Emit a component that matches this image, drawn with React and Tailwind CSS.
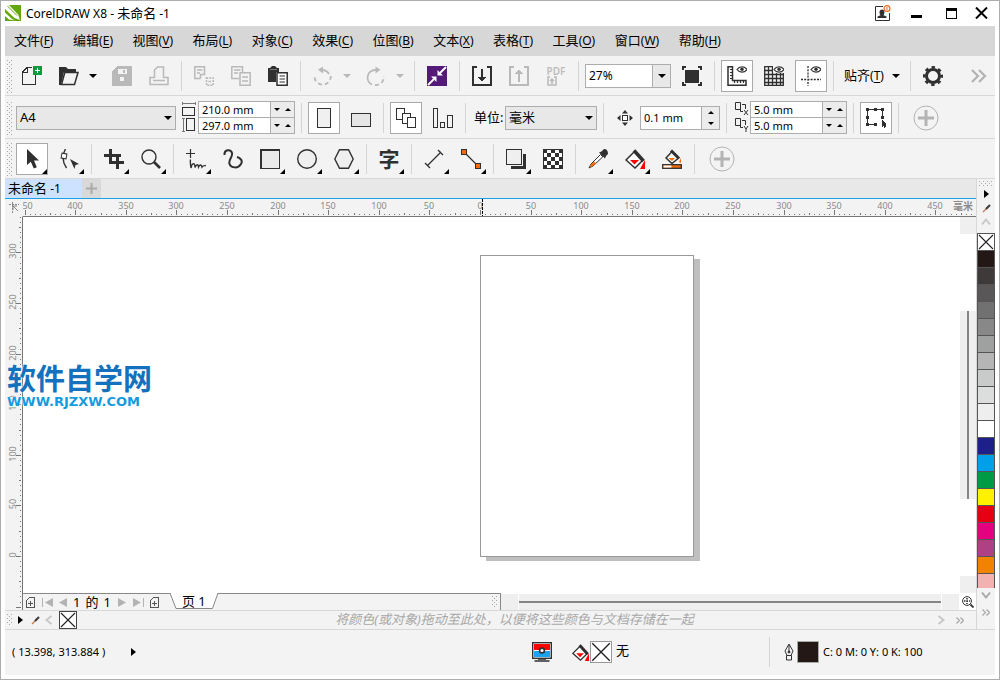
import React, { useLayoutEffect, useRef, useState } from 'react';

const INK = '#303030';
const DIM = '#b9b9b9';

/* ---------- shared pieces ---------- */

function Icon({ children, crisp, size = 20 }) {
  return (
    <svg width={size} height={size} viewBox="0 0 20 20" fill="none" stroke={INK} strokeWidth="1.5" shapeRendering={crisp ? 'crispEdges' : 'auto'} aria-hidden="true" className="shrink-0">
      {children}
    </svg>
  );
}

function Grip({ id, className, width = 5 }) {
  return (
    <svg className={className} width={width} shapeRendering="crispEdges" aria-hidden="true">
      <defs>
        <pattern id={id} width="4" height="4" patternUnits="userSpaceOnUse">
          <rect width="1" height="1" fill="#a9a9a9" />
          <rect x="2" y="2" width="1" height="1" fill="#a9a9a9" />
        </pattern>
      </defs>
      <rect width="100%" height="100%" fill={`url(#${id})`} />
    </svg>
  );
}

const ToolbarGrip = ({ id }) => <Grip id={id} className="-mr-px h-[33px] shrink-0" />;

const Sep = () => <div className="mx-px h-[30px] w-px shrink-0 bg-[#d4d4d4]" />;

function Tool({ label, active, flyout, children }) {
  return (
    <button
      type="button"
      aria-label={label}
      className={`relative flex size-8 shrink-0 items-center justify-center border ${active ? 'border-[#a9a9a9] bg-white' : 'border-transparent'}`}
    >
      {children}
      {flyout && (
        <svg width="5" height="5" className="absolute right-0 bottom-0" aria-hidden="true">
          <path d="M5 0V5H0Z" fill="#000" />
        </svg>
      )}
    </button>
  );
}

function Caret({ dir = 'down', color = '#000', small }) {
  const d = { down: 'M0 0H8L4 4.5Z', up: 'M0 4.5H8L4 0Z' }[dir];
  return (
    <svg width={small ? 6 : 8} height={small ? 3 : 4} viewBox="0 0 8 4.5" preserveAspectRatio="none" aria-hidden="true" className="shrink-0">
      <path d={d} fill={color} />
    </svg>
  );
}

function DropArrow({ label, dim }) {
  return (
    <button type="button" aria-label={label} className="-ml-[5px] flex h-8 w-4 shrink-0 items-center justify-center">
      <Caret color={dim ? '#b8b8b8' : '#000'} />
    </button>
  );
}

function Toolbar({ label, className, children }) {
  return (
    <div role="toolbar" aria-label={label} className={`flex shrink-0 items-center gap-[5px] overflow-hidden border-b border-[#d7d7d7] bg-[#f3f3f3] pl-0.5 ${className}`}>
      {children}
    </div>
  );
}

function AddRound({ label }) {
  return (
    <button type="button" aria-label={label} className="flex h-8 w-[42px] shrink-0 items-center justify-center">
      <svg width="26" height="26" viewBox="0 0 26 26" fill="none" aria-hidden="true">
        <circle cx="13" cy="13" r="12" stroke="#b3b3b3" />
        <path d="M13 5V21M5 13H21" stroke="#b3b3b3" strokeWidth="3" />
      </svg>
    </button>
  );
}

function Select({ label, value, className }) {
  return (
    <span className={`relative flex h-6 shrink-0 items-center ${className}`}>
      <select aria-label={label} defaultValue={value} className="h-full w-full appearance-none border border-[#adadad] bg-[#e8e8e8] pr-5 pl-[3px] text-[13px] text-black">
        <option>{value}</option>
      </select>
      <span className="pointer-events-none absolute right-1"><Caret /></span>
    </span>
  );
}

function PairInput({ first, second, labels }) {
  const row = (value, label, line) => (
    <div className={`flex ${line ? 'h-4 border-b border-[#adadad]' : 'h-[15px]'}`}>
      <input aria-label={label} defaultValue={value} className="w-0 min-w-0 flex-1 bg-white px-[3px] text-[11px] leading-[14px] outline-none" />
      <div className="flex w-6 items-center justify-around border-l border-[#adadad] bg-[#ececec]">
        <button type="button" aria-label={`${label} -`}><Caret small /></button>
        <button type="button" aria-label={`${label} +`}><Caret small dir="up" /></button>
      </div>
    </div>
  );
  return (
    <div className="mb-px h-[33px] w-[97px] shrink-0 overflow-hidden border border-[#adadad]">
      {row(first, labels[0], true)}
      {row(second, labels[1], false)}
    </div>
  );
}

/* ---------- title and menu ---------- */

const MENUS = [
  ['文件', 'F'], ['编辑', 'E'], ['视图', 'V'], ['布局', 'L'], ['对象', 'C'], ['效果', 'C'],
  ['位图', 'B'], ['文本', 'X'], ['表格', 'T'], ['工具', 'O'], ['窗口', 'W'], ['帮助', 'H'],
];

function TitleBar() {
  return (
    <header className="flex h-[25px] shrink-0 items-center bg-white pr-[7px] pb-px">
      <svg width="16" height="16" viewBox="0 0 16 16" aria-hidden="true">
        <rect width="16" height="16" fill="#63a70a" />
        <path d="M0 0H4L13 9.500L15 15L9.500 13L0 4Z" fill="#fff" />
        <path d="M0 7.500L7 14L10 15.500L4 14.500L0 11Z" fill="#fff" />
        <path d="M2.500 1L12 10.500" stroke="#63a70a" strokeWidth="1" />
      </svg>
      <h1 className="ml-[5px] text-[13px] leading-5"><span className="text-[12px]">CorelDRAW X8 - </span>未命名<span className="text-[12px]"> -1</span></h1>
      <div className="ml-auto flex items-center">
        <button type="button" aria-label="账户" className="mr-5">
          <svg width="17" height="17" viewBox="0 0 17 17" fill="none" aria-hidden="true">
            <path d="M9 1.500H1.500V15.500H15.500V8" stroke="#303030" />
            <path d="M3.500 13V11.500L6.500 10.200C5 8.500 5 4.500 8 4.500S11 8.500 9.500 10.200L12.500 11.500V13Z" fill="#303030" />
            <circle cx="13" cy="3.500" r="2.900" stroke="#f26a1b" strokeWidth="1.200" />
            <path d="M13 2V5" stroke="#f26a1b" />
          </svg>
        </button>
        <button type="button" aria-label="最小化" className="mr-6 flex h-[10px] w-[11px] items-end"><span className="h-[3px] w-full bg-black" /></button>
        <button type="button" aria-label="最大化" className="mr-[18px] h-[11px] w-[11px] border border-t-[3px] border-black" />
        <button type="button" aria-label="关闭">
          <svg width="13" height="12" viewBox="0 0 13 12" aria-hidden="true"><path d="M1 .5L12 11.500M12 .5L1 11.500" stroke="#000" strokeWidth="2" /></svg>
        </button>
      </div>
    </header>
  );
}

function MenuBar() {
  return (
    <nav aria-label="菜单" className="flex h-[30px] shrink-0 items-center overflow-hidden bg-[#d7d7d7] pb-0.5 pl-[9px]">
      <div className="flex w-full max-w-[707px] justify-between">
        {MENUS.map(([name, key]) => (
          <button key={name} type="button" className="shrink-0 text-[13px] leading-5">
            {name}<span className="text-[12px]">(<u className="underline-offset-2">{key}</u>)</span>
          </button>
        ))}
      </div>
    </nav>
  );
}

/* ---------- standard toolbar ---------- */

const Eye = ({ x = 10 }) => (
  <g transform={`translate(${x} 0)`}>
    <path d="M0 3.500C2.500 -.2 7.500 -.2 10 3.500C7.500 7 2.500 7 0 3.500Z" fill="#fff" strokeWidth="1.200" />
    <circle cx="5" cy="3.300" r="1.700" fill={INK} stroke="none" />
  </g>
);

function StandardBar() {
  return (
    <Toolbar label="标准" className="h-10 pt-px">
      <ToolbarGrip id="grip-standard" />
      <Tool label="新建">
        <Icon crisp>
          <path d="M13.500 9V18.500H.5V6L5.500 1.500H10" />
          <path d="M1 6.500H5.500V2" />
          <rect x="11" y="0" width="9" height="9" fill="#0a9b3c" stroke="none" />
          <path d="M15.500 2V7M13 4.500H18" stroke="#fff" strokeWidth="1" />
        </Icon>
      </Tool>
      <Tool label="打开">
        <Icon>
          <path d="M0 19V1H7L9 3H17V6H5L2 19Z" fill={INK} stroke="none" />
          <path d="M5.800 6.500H19L15.500 18.500H2.500Z" fill="#f3f3f3" />
        </Icon>
      </Tool>
      <DropArrow label="打开选项" />
      <Tool label="保存">
        <Icon crisp>
          <path d="M0 5L5 0H20V20H0Z" fill={DIM} stroke="none" />
          <rect x="6" y="3" width="9" height="5" fill="#f3f3f3" stroke="none" />
          <rect x="11" y="4" width="2" height="3" fill={DIM} stroke="none" />
          <circle cx="10" cy="13" r="2.500" fill="#f3f3f3" stroke="none" />
        </Icon>
      </Tool>
      <Tool label="打印">
        <Icon>
          <path d="M5.500 12V4L8.500 1H14.500V12M5.500 11.500H1V18.500H19V11.500H14.500M4 14.500H16" stroke={DIM} />
        </Icon>
      </Tool>
      <Sep />
      <Tool label="剪切">
        <Icon>
          <path d="M6.500 12.500H.8V.8H10.500V8.500H6.500V12.500M3 4H8.500M3 7H6" stroke={DIM} />
          <path d="M12.500 11V19.200H19.200V12H12" stroke={DIM} strokeDasharray="2 1" />
          <path d="M14.500 15.500H17" stroke={DIM} />
        </Icon>
      </Tool>
      <Tool label="复制">
        <Icon>
          <path d="M8 12.500H.8V.8H11.500V6M3 4H9.500M3 7H7" stroke={DIM} />
          <path d="M9 6.800H19.200V19.200H9ZM11 11H17M11 15H17" stroke={DIM} />
        </Icon>
      </Tool>
      <Tool label="粘贴">
        <Icon>
          <path d="M0 2H2L4 0H7L9 2H11V6H8V16H0Z" fill={INK} stroke="none" />
          <path d="M2 3.500H9" stroke="#777" strokeWidth="1" />
          <path d="M9 6.800H19.200V19.200H9Z" fill="#fff" />
          <path d="M11.500 10H17M11.500 13H17M11.500 16H17" strokeWidth="1.200" />
        </Icon>
      </Tool>
      <Sep />
      <Tool label="撤消">
        <Icon>
          <path d="M7 4H10A8 8 0 0 1 16 8" stroke={DIM} strokeWidth="1.800" />
          <path d="M17.800 10A8 8 0 0 1 1.500 11" stroke={DIM} strokeWidth="1.800" strokeDasharray="4 3" />
          <path d="M5 3.800L10 .5V7.500Z" fill={DIM} stroke="none" />
        </Icon>
      </Tool>
      <DropArrow label="撤消选项" dim />
      <Tool label="重做">
        <Icon>
          <path d="M12 4H9A7.600 7.600 0 0 0 6 18.500" stroke={DIM} strokeWidth="1.800" />
          <path d="M9 19A8 8 0 0 0 17.800 10" stroke={DIM} strokeWidth="1.800" strokeDasharray="4 3" />
          <path d="M14.500 3.800L9.500 .5V7.500Z" fill={DIM} stroke="none" />
        </Icon>
      </Tool>
      <DropArrow label="重做选项" dim />
      <Sep />
      <Tool label="搜索内容">
        <Icon>
          <rect width="20" height="20" fill="#531a78" stroke="none" />
          <path d="M19 1L13 7M1 19L7 13" stroke="#fff" strokeWidth="1.800" />
          <path d="M10.500 4V9.500H16ZM4 10.500H9.500V16Z" fill="#fff" stroke="none" />
        </Icon>
      </Tool>
      <Sep />
      <Tool label="导入">
        <Icon crisp>
          <path d="M5 1H1V19H19V1H15" />
          <path d="M9 3H11V11H14L10 16L6 11H9Z" fill={INK} stroke="none" />
        </Icon>
      </Tool>
      <Tool label="导出">
        <Icon crisp>
          <path d="M5 1H1V19H19V1H15" stroke={DIM} />
          <path d="M9 16H11V8H14L10 3L6 8H9Z" fill={DIM} stroke="none" />
        </Icon>
      </Tool>
      <Tool label="发布为 PDF">
        <span className="flex flex-col items-center">
          <span className="text-[10px] leading-[10px] font-semibold text-[#bdbdbd]">PDF</span>
          <svg width="10" height="10" viewBox="0 0 10 10" className="mr-2" aria-hidden="true">
            <path d="M3 1H1V9H9V1H7M5 8V4M3 5L5 3L7 5" stroke={DIM} strokeWidth="1.500" fill="none" />
          </svg>
        </span>
      </Tool>
      <Sep />
      <div className="flex h-6 w-[86px] shrink-0 border border-[#adadad]">
        <input aria-label="缩放级别" defaultValue="27%" className="w-0 min-w-0 flex-1 bg-white px-[3px] text-[12px] outline-none" />
        <button type="button" aria-label="缩放选项" className="flex w-[18px] items-center justify-center border-l border-[#adadad] bg-[#e8e8e8]"><Caret /></button>
      </div>
      <Tool label="全屏预览">
        <Icon crisp>
          <path d="M0 4V1H4M16 1H19V4M19 16V19H16M4 19H1V16M1 4V1" />
          <rect x="3" y="4" width="14" height="13" fill={INK} stroke="none" />
        </Icon>
      </Tool>
      <Sep />
      <Tool label="显示标尺" active>
        <Icon>
          <path d="M1 .8H5.500V14.500H19V19.200H1Z" fill="#fff" />
          <path d="M3 3.500H5M3 6.500H5M3 9.500H5M3 12.500H5M7.500 17V15M10.500 17V15M13.500 17V15M16.500 17V15" strokeWidth="1.200" />
          <Eye />
        </Icon>
      </Tool>
      <Tool label="显示网格">
        <Icon>
          <path d="M.7 .7H19.300V19.300H.7ZM4.500 0V20M8.500 0V20M12.500 0V20M16.500 0V20M0 4.500H20M0 8.500H20M0 12.500H20M0 16.500H20" strokeWidth="1.300" />
          <rect x="9" y="-1" width="11" height="8" fill="#f3f3f3" stroke="none" />
          <Eye />
        </Icon>
      </Tool>
      <Tool label="显示辅助线" active>
        <Icon>
          <path d="M7 0V20M0 13.500H20" strokeDasharray="2 1.200" strokeWidth="1.300" />
          <Eye />
        </Icon>
      </Tool>
      <Sep />
      <button type="button" className="flex h-8 w-16 shrink-0 items-center justify-between px-1 text-[13px]">
        <span>贴齐<span className="text-[12px]">(<u className="underline-offset-2">T</u>)</span></span>
        <Caret />
      </button>
      <Sep />
      <Tool label="选项">
        <Icon>
          <circle cx="10" cy="10" r="6.500" strokeWidth="3" />
          <circle cx="10" cy="10" r="8.700" strokeWidth="2.600" strokeDasharray="3.400 3.433" strokeDashoffset="1.700" />
        </Icon>
      </Tool>
      <button type="button" aria-label="更多" className="mr-2 ml-auto shrink-0">
        <svg width="16" height="14" viewBox="0 0 16 14" fill="none" stroke="#b3b3b3" strokeWidth="2.200" aria-hidden="true"><path d="M1 1L7 7L1 13M8 1L14 7L8 13" /></svg>
      </button>
    </Toolbar>
  );
}

/* ---------- property bar ---------- */

const DupIcon = ({ axis }) => (
  <svg width="15" height="16" viewBox="0 0 15 16" fill="none" stroke={INK} aria-hidden="true">
    <path d="M.5 1.500H5.500V8.500H.5Z" />
    <path d="M7 3.500H10.500V8M5.500 5V10.500H8" strokeWidth="1" />
    {axis === 'x' ? <path d="M9 9L13 14M13 9L9 14" /> : <path d="M9 9L11 12L13 9M11 12V15" />}
  </svg>
);

function PropertyBar() {
  return (
    <Toolbar label="属性栏" className="h-[43px] pt-0.5">
      <ToolbarGrip id="grip-property" />
      <Select label="页面大小" value="A4" className="w-40" />
      <div className="flex w-[114px] shrink-0 items-center">
        <div className="flex w-[17px] flex-col gap-0.5 pb-0.5 pl-px">
          <svg width="14" height="14" viewBox="0 0 14 14" fill="none" stroke={INK} shapeRendering="crispEdges" aria-hidden="true"><path d="M1 1.500H13M.5 0V3M13.500 0V3" stroke="#777" /><rect x=".5" y="5.500" width="12" height="8" /></svg>
          <svg width="14" height="14" viewBox="0 0 14 14" fill="none" stroke={INK} shapeRendering="crispEdges" aria-hidden="true"><path d="M1.500 1V13M0 .5H3M0 13.500H3" stroke="#777" /><rect x="4.500" y=".5" width="8" height="12" /></svg>
        </div>
        <PairInput first="210.0 mm" second="297.0 mm" labels={['页面宽度', '页面高度']} />
      </div>
      <Sep />
      <Tool label="纵向" active><Icon crisp><path d="M3.500 .5H16.500V19.500H3.500Z" fill="#f0f0f0" /></Icon></Tool>
      <Tool label="横向"><Icon crisp><rect x=".5" y="5.500" width="19" height="13" fill="#e6e6e6" /></Icon></Tool>
      <Sep />
      <Tool label="所有页面" active>
        <Icon crisp>
          <g fill="#fff" strokeWidth="1.200"><path d="M.5 .5H8.500V11.500H.5Z" /><path d="M6.500 5.500H14.500V15.500H6.500Z" /><path d="M11.500 9.500H19.500V19.500H11.500Z" /></g>
        </Icon>
      </Tool>
      <Tool label="当前页面">
        <Icon crisp><g strokeWidth="1.200"><path d="M.5 .5H4.500V19.500H.5Z" /><path d="M7.500 14.500H11.500V19.500H7.500Z" /><path d="M14.500 7.500H19.500V19.500H14.500Z" /></g></Icon>
      </Tool>
      <Sep />
      <div className="flex shrink-0 items-center">
        <span className="w-[33px] pl-0.5 text-[13px] whitespace-nowrap">单位:</span>
        <Select label="单位" value="毫米" className="w-[92px]" />
      </div>
      <Sep />
      <div className="flex shrink-0 items-center">
        <span className="flex w-[30px] justify-center">
          <svg width="16" height="16" viewBox="0 0 16 16" aria-hidden="true">
            <rect x="5.500" y="5.500" width="5" height="5" fill="#fff" stroke={INK} />
            <path d="M8 0L11 3.500H5ZM8 16L11 12.500H5ZM0 8L3.500 5V11ZM16 8L12.500 5V11Z" fill={INK} />
          </svg>
        </span>
        <div className="flex h-6 w-20 border border-[#adadad]">
          <input aria-label="微调距离" defaultValue="0.1 mm" className="w-0 min-w-0 flex-1 bg-white px-[3px] text-[11px] outline-none" />
          <div className="flex w-[18px] flex-col items-center justify-around border-l border-[#adadad] bg-[#ececec]">
            <button type="button" aria-label="增加"><Caret small dir="up" /></button>
            <button type="button" aria-label="减少"><Caret small /></button>
          </div>
        </div>
      </div>
      <Sep />
      <div className="flex shrink-0 items-center">
        <div className="flex w-[17px] flex-col pb-0.5 pl-0.5"><DupIcon axis="x" /><DupIcon axis="y" /></div>
        <PairInput first="5.0 mm" second="5.0 mm" labels={['再制距离 X', '再制距离 Y']} />
      </div>
      <Sep />
      <Tool label="将对象视为已填充" active>
        <Icon crisp>
          <path d="M1.500 1.500H16.500V9M1.500 1.500V16.500H11" strokeWidth="1.500" />
          <g fill={INK} stroke="none"><rect width="3" height="3" /><rect x="8" y="0" width="3" height="3" /><rect x="15" width="3" height="3" /><rect y="8" width="3" height="3" /><rect x="15" y="8" width="3" height="3" /><rect y="15" width="3" height="3" /><rect x="8" y="15" width="3" height="3" /></g>
          <path d="M16 12V19L17.500 17.500L18.500 20L20 19V15.500Z" fill={INK} stroke="none" />
        </Icon>
      </Tool>
      <Sep />
      <AddRound label="自定义属性栏" />
    </Toolbar>
  );
}

/* ---------- toolbox ---------- */

const FillBucket = ({ size }) => (
  <Icon size={size}>
    <path d="M1 11L10 2L18 11L10 19Z" fill="#fff" />
    <path d="M9 1.500L18.500 12" strokeWidth="3.500" />
    <path d="M5 11H14L9.500 15.500Z" fill="#f00" stroke="none" />
    <path d="M15 20L20 11V20Z" fill="#f00" stroke="none" />
  </Icon>
);

const CHECKS = Array.from({ length: 25 }, (_, i) => [i % 5, Math.floor(i / 5)]).filter(([x, y]) => (x + y) % 2 === 1);

function Toolbox() {
  return (
    <Toolbar label="工具箱" className="h-10 pt-px">
      <ToolbarGrip id="grip-toolbox" />
      <Tool label="选择" active flyout>
        <Icon><path d="M5 0V16L8.800 12.800L11.800 19.500L14.800 18.200L12 11.500H17Z" fill={INK} stroke="none" /></Icon>
      </Tool>
      <Tool label="形状" flyout>
        <Icon>
          <path d="M6.500 0C2.500 7 3.500 13 7.500 19" strokeWidth="1.400" />
          <rect x="2.500" y="4.500" width="5" height="5" fill="#fff" strokeWidth="1" transform="rotate(10 5 7)" />
          <path d="M11 10L20 15L16.500 16L15.500 20Z" fill={INK} stroke="none" />
        </Icon>
      </Tool>
      <Sep />
      <Tool label="裁剪" flyout>
        <Icon crisp><path d="M6.500 0V13.500H20M0 6.500H13.500V20" strokeWidth="3" /><path d="M10 6.500H17" strokeWidth="3" /></Icon>
      </Tool>
      <Tool label="缩放" flyout>
        <Icon><circle cx="8" cy="8" r="7" strokeWidth="1.400" /><path d="M13 13L19 19" strokeWidth="2.600" /></Icon>
      </Tool>
      <Sep />
      <Tool label="手绘" flyout>
        <Icon>
          <path d="M4.500 0V9M0 4.500H9" strokeWidth="1.200" />
          <path d="M4.500 10.500C4 13 4.500 16 5 19C6 13.500 9 13 9 18.500C10 16 12 14 12.500 18C14 15 15.500 15.500 16 18C17.500 16 19 17 20 16.500" strokeWidth="1.400" />
        </Icon>
      </Tool>
      <Tool label="艺术笔">
        <Icon><path d="M1.500 6C1 0 8 0 9 4S5 11 6.500 15S15 20 18 15S14 8 14 8" strokeWidth="2" /></Icon>
      </Tool>
      <Tool label="矩形" flyout><Icon crisp><rect x=".8" y=".8" width="18.500" height="18.500" fill="#e9e9e9" /></Icon></Tool>
      <Tool label="椭圆形" flyout><Icon><circle cx="10" cy="10" r="9.300" fill="#efefef" strokeWidth="1.400" /></Icon></Tool>
      <Tool label="多边形" flyout><Icon><path d="M.8 10L5.500 .8H14.500L19.200 10L14.500 19.200H5.500Z" fill="#efefef" strokeWidth="1.400" /></Icon></Tool>
      <Sep />
      <Tool label="文本" flyout><span className="text-[21px] leading-5 font-bold text-[#303030]">字</span></Tool>
      <Sep />
      <Tool label="平行度量" flyout>
        <Icon><path d="M3 17L17 3M1 14L6 19M14 1L19 6" strokeWidth="1.300" /></Icon>
      </Tool>
      <Tool label="直线连接器" flyout>
        <Icon>
          <path d="M3 3L17 17" strokeWidth="1.300" />
          <rect x=".5" y=".5" width="5" height="5" fill="#f26a0a" strokeWidth="1" /><rect x="14.500" y="14.500" width="5" height="5" fill="#f26a0a" strokeWidth="1" />
        </Icon>
      </Tool>
      <Sep />
      <Tool label="阴影" flyout>
        <Icon crisp><path d="M5 18.500H18.500V5" strokeWidth="3" /><rect x=".5" y=".5" width="15" height="15" fill="#efefef" strokeWidth="1.200" /></Icon>
      </Tool>
      <Tool label="透明度">
        <Icon crisp>
          <rect width="20" height="20" fill={INK} stroke="none" />
          {CHECKS.map(([x, y]) => <rect key={`${x}-${y}`} x={x * 4} y={y * 4} width="4" height="4" fill="#fff" stroke="none" />)}
          <rect x=".5" y=".5" width="19" height="19" strokeWidth="1" />
        </Icon>
      </Tool>
      <Sep />
      <Tool label="颜色滴管" flyout>
        <Icon>
          <path d="M1 19L3 15L12.500 5.500L14.800 7.800L5 17Z" fill="#fff" strokeWidth="1" />
          <path d="M1.500 18.500L3 15.500L6 12.500L8 14.500L5 17Z" fill="#f26a0a" stroke="none" />
          <path d="M11 3.500L17 9.500L18 7L20 5C20 1 18 0 16 0L13.500 2.500Z" fill={INK} stroke="none" />
        </Icon>
      </Tool>
      <Tool label="交互式填充" flyout><FillBucket /></Tool>
      <Tool label="智能填充">
        <Icon>
          <path d="M4 9L10 2.500L16.500 9L10 14.500Z" fill="#fff" /><path d="M9 1.500L17 9.500" strokeWidth="3" />
          <path d="M6.500 9H13L10 12Z" fill="#f26a0a" stroke="none" /><path d="M17 13L19 9V14Z" fill="#f26a0a" stroke="none" />
          <rect x=".7" y="15.700" width="18.600" height="3.600" fill="#f26a0a" strokeWidth="1.300" /><rect x="1.500" y="16.500" width="8" height="2" fill="#fff" stroke="none" />
        </Icon>
      </Tool>
      <Sep />
      <AddRound label="自定义工具箱" />
    </Toolbar>
  );
}

/* ---------- rulers ---------- */

// One minor division is 5 mm at the current zoom.
const MINOR = 5.06;

function useLength(axis) {
  const ref = useRef(null);
  const [length, setLength] = useState(0);
  useLayoutEffect(() => {
    const measure = () => setLength(Math.floor(ref.current.getBoundingClientRect()[axis]));
    measure();
    const observer = new ResizeObserver(measure);
    observer.observe(ref.current);
    return () => observer.disconnect();
  }, [axis]);
  return [ref, length];
}

function ticksFor(length, zero, sign) {
  const out = [];
  for (let n = -200; n <= 400; n += 1) {
    const pos = Math.round(zero + sign * n * MINOR);
    if (pos >= 0 && pos < length) {
      out.push({ n, pos, major: n % 10 === 0, len: n % 10 === 0 ? 5 : n % 5 === 0 ? 2 : 1 });
    }
  }
  return out;
}

function HRuler() {
  const [ref, length] = useLength('width');
  return (
    <svg ref={ref} className="h-[17px] min-w-0 flex-1" aria-hidden="true">
      {ticksFor(length, 457, 1).map(({ n, pos, major, len }) => (
        <g key={n}>
          <rect x={pos} y={16 - len} width="1" height={len} fill="#777" />
          {major && <text x={pos} y="10" textAnchor="middle" fontSize="9" fill="#8a8a8a">{Math.abs(n * 5)}</text>}
        </g>
      ))}
      <path d="M459.500 0V17" stroke="#000" strokeDasharray="3 1" />
    </svg>
  );
}

function VRuler() {
  const [ref, length] = useLength('height');
  return (
    <svg ref={ref} className="h-full w-[17px] shrink-0 bg-[#f3f3f3]" aria-hidden="true">
      {ticksFor(length, 339, -1).map(({ n, pos, major, len }) => (
        <g key={n}>
          <rect x={16 - len} y={pos} width={len} height="1" fill="#777" />
          {major && pos < length - 8 && <text transform={`translate(11 ${pos - 1}) rotate(-90)`} textAnchor="middle" fontSize="9" fill="#8a8a8a">{Math.abs(n * 5)}</text>}
        </g>
      ))}
    </svg>
  );
}

/* ---------- document area ---------- */

function Watermark() {
  return (
    <div className="pointer-events-none absolute top-[144px] left-[2px] whitespace-nowrap [text-shadow:0_0_2px_#fff,0_0_2px_#fff]">
      <p className="text-[29px] leading-[36px] font-bold text-[#1471bd]">软件自学网</p>
      <p className="font-['DejaVu_Sans'] text-[13px] leading-[10px] font-bold text-[#169be0]">WWW.RJZXW.COM</p>
    </div>
  );
}

const AddPage = () => (
  <svg width="9" height="11" viewBox="0 0 9 11" fill="none" stroke="#555" shapeRendering="crispEdges" aria-hidden="true"><path d="M3.500 .5H8.500V10.500H.5V3.500ZM4.500 4V9M2 6.500H7" /></svg>
);

const Step = ({ flip, bar }) => (
  <svg width={bar ? 11 : 8} height="9" viewBox={bar ? '0 0 11 9' : '3 0 8 9'} className={flip ? 'rotate-180' : ''} aria-hidden="true">
    <path d="M11 0V9L3 4.500Z" fill="#b3b3b3" />
    {bar && <path d="M.5 0V9" stroke="#b3b3b3" />}
  </svg>
);

function PageNav() {
  return (
    <div className="flex w-[50.2%] shrink-0 items-center border-t border-r border-[#888] bg-[#f3f3f3] pl-[3px] text-[13px] leading-[14px]">
      <button type="button" aria-label="在前面添加页" className="mr-[7px]"><AddPage /></button>
      <button type="button" aria-label="第一页" className="mr-[6px]"><Step bar /></button>
      <button type="button" aria-label="上一页" className="mr-[6px]"><Step /></button>
      <span className="mr-[7px] flex gap-[5px] pb-px"><span>1</span><span>的</span><span>1</span></span>
      <button type="button" aria-label="下一页" className="mr-[7px]"><Step flip /></button>
      <button type="button" aria-label="最后一页" className="mr-[6px]"><Step flip bar /></button>
      <button type="button" aria-label="在后面添加页" className="mr-[11px]"><AddPage /></button>
      <button type="button" aria-current="page" className="relative -mt-px h-[17px] w-12 pb-px">
        <svg className="absolute inset-0" width="48" height="17" viewBox="0 0 48 17" aria-hidden="true"><path d="M0 0L6 15.500H42.500L48 0" fill="#fff" stroke="#888" /></svg>
        <span className="relative">页 1</span>
      </button>
      <Grip id="grip-nav" className="mr-[3px] ml-auto h-3" />
    </div>
  );
}

function DocumentArea() {
  return (
    <div className="flex min-w-0 flex-1 flex-col">
      <div role="tablist" className="flex h-5 shrink-0 border-b border-[#18a0e8] bg-[#e8e8e8]">
        <button type="button" role="tab" aria-selected="true" className="w-[77px] bg-[#cce2ff] pl-[3px] text-left text-[13px] leading-[18px]">未命名<span className="text-[12px]"> -1</span></button>
        <button type="button" aria-label="新建文档" className="flex w-[19px] items-center justify-center bg-[#d9d9d9]">
          <svg width="11" height="11" viewBox="0 0 11 11" aria-hidden="true"><path d="M5.500 0V11M0 5.500H11" stroke="#aaa" strokeWidth="2" /></svg>
        </button>
      </div>

      <div className="flex h-[18px] shrink-0 bg-[#f3f3f3]">
        <svg width="17" height="17" viewBox="0 0 17 17" fill="none" stroke="#888" className="shrink-0" aria-hidden="true">
          <path d="M4 5.500H14M7.500 3V15" strokeDasharray="2 1" /><path d="M8 7L13 12M8 7H12M8 7V11" />
        </svg>
        <div className="relative flex min-w-0 flex-1 border-b border-l border-b-[#777] border-l-transparent">
          <HRuler />
          <span className="absolute top-[2px] right-[3px] bg-[#f3f3f3] text-[10px] leading-[10px] font-bold text-[#8a8a8a]">毫米</span>
        </div>
      </div>

      <div className="relative flex min-h-0 flex-1">
        <VRuler />
        <div className="flex min-w-0 flex-1 flex-col border-l border-[#777]">
          <div className="flex min-h-0 flex-1 bg-white">
            <main className="relative min-w-0 flex-1 overflow-hidden">
              <div className="absolute top-[38px] left-[457px] h-[302px] w-[214px] border border-[#999] bg-white shadow-[6px_4px_0_#bfbfbf]" />
            </main>
            <div role="scrollbar" aria-label="垂直滚动" aria-controls="canvas" aria-valuenow={50} className="flex w-4 flex-col items-center">
              <span className="h-[17px] w-full bg-[#efefef]" />
              <span className="flex-1" />
              <span className="flex h-1/2 w-full justify-center bg-[#efefef]"><span className="w-0.5 bg-[#858585]" /></span>
              <span className="flex-1" />
              <span className="h-[17px] w-full bg-[#efefef]" />
            </div>
          </div>
          <div className="flex h-[17px] shrink-0 bg-white">
            <PageNav />
            <div role="scrollbar" aria-label="水平滚动" aria-controls="canvas" aria-valuenow={50} className="mt-px flex min-w-0 flex-1 gap-px">
              <span className="w-[17px] bg-[#efefef]" />
              <span className="flex flex-1 items-center bg-[#efefef]"><span className="h-0.5 w-full bg-[#858585]" /></span>
              <span className="w-[17px] bg-[#efefef]" />
            </div>
            <button type="button" aria-label="导航器" className="flex w-[17px] items-center justify-center">
              <svg width="12" height="12" viewBox="0 0 12 12" fill="none" stroke={INK} aria-hidden="true"><circle cx="5" cy="5" r="4.400" /><path d="M8.500 8.500L11.500 11.500" strokeWidth="1.800" /><path d="M5 2V8M2 5H8" strokeDasharray="1.500 1" strokeWidth="1.500" /></svg>
            </button>
          </div>
        </div>
        <Watermark />
      </div>

      <div className="flex h-5 shrink-0 items-center border-y border-[#d7d7d7] bg-[#f3f3f3] pl-0.5">
        <Grip id="grip-palette" className="mr-[6px] h-3 shrink-0" />
        <button type="button" aria-label="调色板选项" className="mr-2"><Play /></button>
        <button type="button" aria-label="滴管" className="mr-1"><Dropper /></button>
        <button type="button" aria-label="向左滚动" className="mr-[5px]"><Chevron dir="left" /></button>
        <button type="button" aria-label="无颜色" className="size-[18px] border border-[#444] bg-white"><Cross /></button>
        <p className="min-w-0 flex-1 truncate pb-0.5 pl-4 text-center text-[13px] leading-4 text-[#a8a8a8] italic">将颜色(或对象)拖动至此处，以便将这些颜色与文档存储在一起</p>
        <button type="button" aria-label="向右滚动" className="mr-[10px]"><Chevron dir="right" /></button>
        <button type="button" aria-label="展开" className="mr-3"><Double /></button>
      </div>
    </div>
  );
}

/* ---------- palette ---------- */

const Play = () => <svg width="5" height="8" viewBox="0 0 5 8" aria-hidden="true"><path d="M0 0L5 4L0 8Z" fill="#000" /></svg>;

const Dropper = () => (
  <svg width="9" height="9" viewBox="0 0 9 9" aria-hidden="true"><path d="M1 8L6 3" stroke="#c07a55" strokeWidth="1.300" /><path d="M4 5L8 1" stroke="#404040" strokeWidth="2.200" /></svg>
);

function Chevron({ dir, color = '#c8c8c8' }) {
  const d = { left: 'M7.500 1L2.500 5L7.500 9', right: 'M2.500 1L7.500 5L2.500 9', up: 'M1 7.500L5 2.500L9 7.500', down: 'M1 2.500L5 7.500L9 2.500' }[dir];
  return <svg width="10" height="10" viewBox="0 0 10 10" fill="none" stroke={color} strokeWidth="2" aria-hidden="true"><path d={d} /></svg>;
}

const Double = () => (
  <svg width="8" height="7" viewBox="0 0 8 7" fill="none" stroke="#a8a8a8" strokeWidth="1.300" aria-hidden="true"><path d="M.5 .5L3.500 3.500L.5 6.500M4.500 .5L7.500 3.500L4.500 6.500" /></svg>
);

const Cross = () => (
  <svg className="h-full w-full" viewBox="0 0 16 16" aria-hidden="true"><path d="M1 1L15 15M15 1L1 15" stroke="#222" strokeWidth="1.100" /></svg>
);

const COLORS = [
  '#231815', '#3e3a39', '#595757', '#727171', '#888888', '#9fa0a0', '#b5b5b6', '#c9caca', '#dcdddd', '#eeeeee',
  '#ffffff', '#1d2088', '#00a0e9', '#009944', '#fff100', '#e60012', '#e4007f', '#ae4084', '#f08300', '#f4b1b1',
];

function Palette() {
  return (
    <aside aria-label="调色板" className="flex w-[19px] shrink-0 flex-col items-center border-b border-l border-[#d7d7d7] bg-[#f3f3f3] pt-[2px]">
      <Grip id="grip-swatches" width={14} className="h-[5px] shrink-0" />
      <button type="button" aria-label="选项" className="mt-1 shrink-0"><span className="block"><Play /></span></button>
      <button type="button" aria-label="滴管" className="mt-[6px] shrink-0"><Dropper /></button>
      <button type="button" aria-label="向上滚动" className="mt-1 mb-[6px] shrink-0"><Chevron dir="up" /></button>
      <div className="flex min-h-0 w-full flex-1 flex-col overflow-hidden border-x border-[#555]">
        <button type="button" aria-label="无颜色" className="h-[17px] w-full shrink-0 border-t border-[#555] bg-white"><Cross /></button>
        {COLORS.map((c) => (
          <button key={c} type="button" aria-label={c} className="h-[17px] w-full shrink-0 border-t border-[#555]" style={{ backgroundColor: c }} />
        ))}
      </div>
      <button type="button" aria-label="向下滚动" className="mt-0.5 shrink-0"><Chevron dir="down" color="#a8a8a8" /></button>
      <button type="button" aria-label="展开调色板" className="mt-[9px] mb-[13px] shrink-0"><Double /></button>
    </aside>
  );
}

/* ---------- status ---------- */

function StatusBar() {
  return (
    <footer className="grid h-[45px] shrink-0 grid-cols-[527fr_237fr_226fr] items-center bg-[#f3f3f3] pb-px text-[11px]">
      <div className="flex items-center gap-[26px] pl-[7px]">
        <span>( 13.398, 313.884 )</span>
        <button type="button" aria-label="光标信息"><Play /></button>
      </div>
      <div className="flex items-center">
        <svg width="20" height="20" viewBox="0 0 20 20" className="mr-5" aria-hidden="true">
          <rect x=".7" y=".7" width="18.600" height="15.600" fill="#fff" stroke={INK} strokeWidth="1.400" />
          <rect x="2" y="2" width="16" height="6" fill="#f00" /><rect x="2" y="9" width="16" height="6" fill="#19a3f0" />
          <circle cx="10" cy="8.500" r="2.400" fill="#fff" stroke={INK} strokeWidth="1.600" />
          <path d="M6 17H14M2.500 19H17.500" stroke={INK} strokeWidth="1.600" />
        </svg>
        <FillBucket size={17} />
        <span className="ml-px size-[22px] shrink-0 border border-[#999] bg-white"><Cross /></span>
        <span className="ml-1 pb-0.5 text-[13px]">无</span>
      </div>
      <div className="flex h-[30px] items-center border-l border-[#d4d4d4] pl-[14px]">
        <svg width="10" height="18" viewBox="0 0 10 18" fill="none" stroke={INK} aria-hidden="true"><path d="M5 1L9 8L7 12.500H3L1 8ZM5 2V9M2.500 12.500H7.500V17H2.500Z" /><circle cx="5" cy="9" r="1" fill={INK} /></svg>
        <span className="mr-1 ml-[3px] size-[22px] border border-[#aaa] bg-[#231815]" />
        <span className="whitespace-nowrap">C: 0 M: 0 Y: 0 K: 100</span>
      </div>
    </footer>
  );
}

export default function App() {
  return (
    <div className="flex h-screen min-h-[480px] flex-col overflow-hidden border border-[#adadad] bg-white px-1 pb-1 font-['Noto_Sans','Noto_Sans_CJK_SC',sans-serif] text-black">
      <TitleBar />
      <MenuBar />
      <StandardBar />
      <PropertyBar />
      <Toolbox />
      <div id="canvas" className="flex min-h-0 flex-1">
        <DocumentArea />
        <Palette />
      </div>
      <StatusBar />
    </div>
  );
}
